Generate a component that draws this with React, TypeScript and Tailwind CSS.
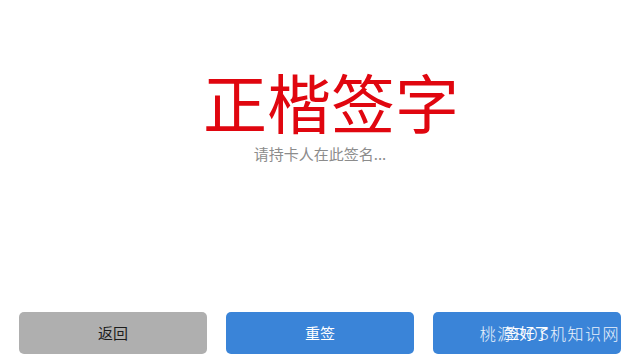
const cjk = "font-['Noto_Sans_CJK_SC','Noto_Sans',sans-serif]";

function Heading() {
  return (
    <div className="flex flex-col items-center pt-[68px]">
      <p className={`${cjk} ml-[22px] text-[64px] leading-[64px] text-[#e0060f]`}>正楷签字</p>
      <p className={`${cjk} mt-[12px] text-[15px] leading-[20px] text-[#8c8c8c]`}>请持卡人在此签名...</p>
    </div>
  );
}

function Button({ label, tone }: { label: string; tone: "gray" | "blue" }) {
  const color = tone === "gray" ? "bg-[#afafaf] text-[#1c1c1c]" : "bg-[#3a84d8] text-white";
  return (
    <div className={`${color} ${cjk} flex h-[42px] flex-1 items-center justify-center rounded-[5px] text-[15px]`}>
      {label}
    </div>
  );
}

export default function App() {
  return (
    <div className="flex h-[360px] w-full flex-col justify-between bg-white">
      <Heading />
      <div className="flex gap-[19px] px-[19px] pb-[6px]">
        <Button label="返回" tone="gray" />
        <Button label="重签" tone="blue" />
        <div className="relative flex flex-1">
          <Button label="签好了" tone="blue" />
          <span className={`absolute right-[1px] top-[10px] ${cjk} text-[16px] font-light leading-[22px] tracking-[1.5px] text-white/90`}>
            桃源POS机知识网
          </span>
        </div>
      </div>
    </div>
  );
}
